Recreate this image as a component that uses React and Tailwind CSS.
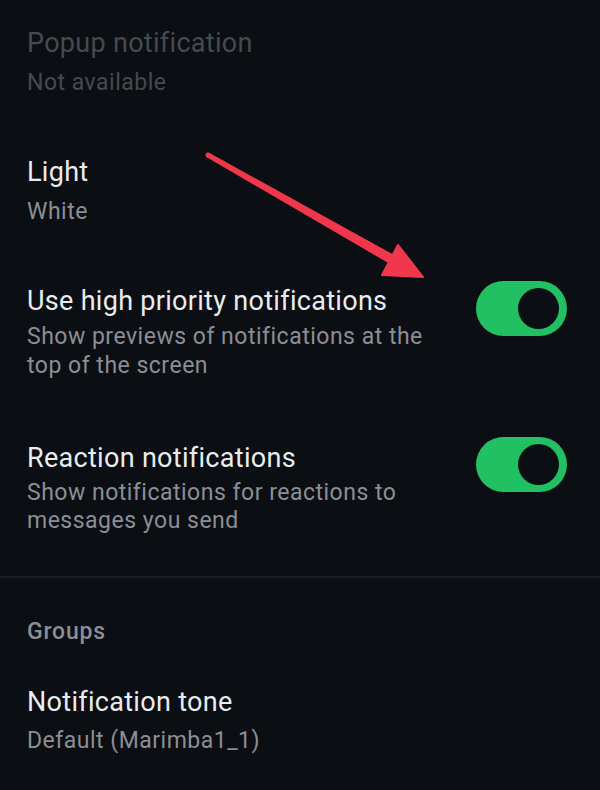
import React from "react";

function Toggle({ className = "" }) {
  return (
    <div className={`flex h-[55px] w-[91px] shrink-0 items-center justify-end rounded-full bg-[#21c063] pr-[8px] ${className}`}>
      <div className="h-[41px] w-[41px] rounded-full bg-[#0b0e13]" />
    </div>
  );
}

function Row({ title, subtitle, disabled, toggle, toggleClass, className = "", subLeading = "leading-[30px]", subGap = "mt-[8px]" }) {
  return (
    <div className={`flex items-start pl-[27px] pr-[33px] ${className}`}>
      <div className="flex-1">
        <div className={`text-[27px] leading-[34px] tracking-[0.3px] ${disabled ? "text-[#464a50]" : "text-[#e9edef]"}`}>{title}</div>
        <div className={`${subGap} text-[23px] tracking-[0.5px] ${subLeading} ${disabled ? "text-[#464a50]" : "text-[#8b8f94]"}`}>{subtitle}</div>
      </div>
      {toggle && <Toggle className={toggleClass} />}
    </div>
  );
}

function Arrow() {
  return (
    <svg className="pointer-events-none absolute left-0 top-0" width="600" height="790" viewBox="0 0 600 790">
      <polygon points="206.8,157.2 209.2,152.8 395,255.4 390,264" fill="#f1374c" />
      <circle cx="208" cy="155" r="2.5" fill="#f1374c" />
      <polygon points="398,245 423,277 382,275" fill="#f1374c" stroke="#f1374c" strokeWidth="2" strokeLinejoin="round" />
    </svg>
  );
}

export default function App() {
  return (
    <div className="relative h-[790px] w-[600px] overflow-hidden bg-[#0b0e13] font-['Roboto',sans-serif]">
      <div className="pt-[26px]">
        <Row title="Popup notification" subtitle="Not available" disabled />
        <Row className="mt-[57px]" title="Light" subtitle="White" />
        <Row
          className="mt-[57px]"
          title="Use high priority notifications"
          subtitle={<>Show previews of notifications at the<br />top of the screen</>}
          subLeading="leading-[29px]"
          subGap="mt-[4px]"
          toggle
          toggleClass="-mt-[3px]"
        />
        <Row
          className="mt-[61px]"
          title="Reaction notifications"
          subtitle={<>Show notifications for reactions to<br />messages you send</>}
          subLeading="leading-[28px]"
          subGap="mt-[4px]"
          toggle
          toggleClass="-mt-[4px]"
        />
        <div className="mt-[41px] h-[2px] w-full bg-[#1b1e23]" />
        <div className="mt-[39px] pl-[27px] text-[23px] font-medium leading-[30px] tracking-[0.8px] text-[#8b8f94]">Groups</div>
        <div className="mt-[38px]">
          <Row title="Notification tone" subtitle="Default (Marimba1_1)" subGap="mt-[7px]" />
        </div>
      </div>
      <Arrow />
    </div>
  );
}
